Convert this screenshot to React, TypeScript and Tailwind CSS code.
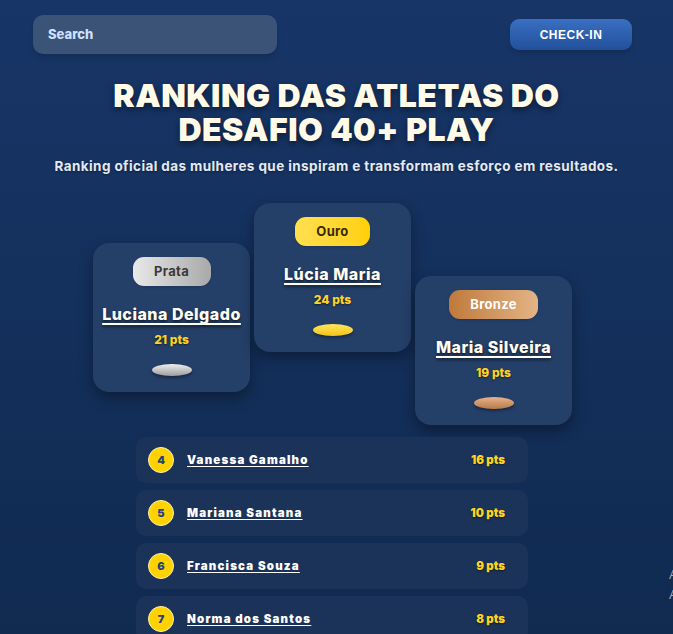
const podium = [
  { name: "Luciana Delgado", pts: 21, label: "Prata", offset: "mt-10", badge: "w-[78px] bg-gradient-to-r from-[#e9e9e9] to-[#a9a9a9] text-[#3a3a3a]", disc: "bg-gradient-to-b from-[#f0f0f0] to-[#9d9d9d]" },
  { name: "Lúcia Maria", pts: 24, label: "Ouro", offset: "mt-0", badge: "w-[75px] bg-gradient-to-r from-[#ffe04d] to-[#ffd000] text-[#3a2a00]", disc: "bg-gradient-to-b from-[#ffe45a] to-[#f2c400]" },
  { name: "Maria Silveira", pts: 19, label: "Bronze", offset: "mt-[73px]", badge: "w-[89px] bg-gradient-to-r from-[#bf7a3a] to-[#e3b486] text-white", disc: "bg-gradient-to-b from-[#e8b38a] to-[#b87a4a]" },
];

const rest = [
  { pos: 4, name: "Vanessa Gamalho", pts: "16 pts" },
  { pos: 5, name: "Mariana Santana", pts: "10 pts" },
  { pos: 6, name: "Francisca Souza", pts: "9 pts" },
  { pos: 7, name: "Norma dos Santos", pts: "8 pts" },
];

export default function App() {
  return (
    <main
      className="relative w-[673px] h-[634px] overflow-hidden bg-gradient-to-b from-[#173567] to-[#102a50] text-white"
      style={{ fontFamily: "Inter, 'Noto Sans', sans-serif" }}
    >
      <header className="flex items-center justify-between pl-[33px] pr-[41px] pt-[15px]">
        <div className="w-[244px] h-[39px] rounded-[10px] bg-[#3a5377] shadow-md flex items-center pl-[15px]">
          <span className="text-[13px] font-extrabold text-[#cfe0ff]">Search</span>
        </div>
        <button className="w-[122px] h-[31px] rounded-[9px] bg-gradient-to-b from-[#3a6fc2] to-[#22509b] shadow-md text-[12px] font-bold tracking-[0.5px] text-white" style={{ fontFamily: "'Liberation Sans', Arial, sans-serif" }}>
          CHECK-IN
        </button>
      </header>

      <section className="text-center mt-[25px]">
        <h1 className="text-[32px] leading-[34px] font-black tracking-[0.5px] text-[#fffbe8] [text-shadow:0_3px_6px_rgba(0,0,0,0.45)]">
          RANKING DAS ATLETAS DO
          <br />
          DESAFIO 40+ PLAY
        </h1>
        <p className="mt-[9px] text-[13.5px] font-bold tracking-[0.4px] text-[#e4e9f2] [text-shadow:0_1px_2px_rgba(0,0,0,0.4)]">
          Ranking oficial das mulheres que inspiram e transformam esforço em resultados.
        </p>
      </section>

      <section className="flex justify-center items-start gap-[4px] mt-[27px] pr-[8px]">
        {podium.map((p) => (
          <div
            key={p.label}
            className={`${p.offset} w-[157px] h-[149px] rounded-[16px] bg-[#243f68] shadow-[0_6px_14px_rgba(0,0,0,0.35)] flex flex-col items-center pt-[14px]`}
          >
            <div className={`${p.badge} h-[29px] rounded-[11px] flex items-center justify-center text-[13px] font-bold tracking-[0.3px] shadow-sm`}>
              {p.label}
            </div>
            <div className="mt-[16px] text-[16px] font-extrabold tracking-[0.5px] underline underline-offset-[3px] decoration-[1.5px] text-[#fffdf2] [text-shadow:0_2px_3px_rgba(0,0,0,0.55)]">
              {p.name}
            </div>
            <div className="mt-[5px] text-[12px] font-extrabold text-[#ffd21f] [text-shadow:0_1px_2px_rgba(0,0,0,0.5)]">
              {p.pts} pts
            </div>
            <div className={`mt-[15px] w-[40px] h-[12px] rounded-[50%] ${p.disc} shadow-[0_2px_3px_rgba(0,0,0,0.35)]`} />
          </div>
        ))}
      </section>

      <section className="flex flex-col gap-[7px] w-[392px] ml-[136px] mt-[12px]">
        {rest.map((r) => (
          <div key={r.pos} className="h-[46px] rounded-[10px] bg-[#1b3358] flex items-center pl-[12px] pr-[23px]">
            <div className="w-[26px] h-[26px] rounded-full bg-[#ffd200] border border-[#fff3b0] flex items-center justify-center text-[11px] font-black text-[#2c3f7a]">
              {r.pos}
            </div>
            <span className="ml-[13px] text-[11.5px] font-black tracking-[1.2px] underline underline-offset-[2px] text-white">
              {r.name}
            </span>
            <span className="ml-auto text-[11.5px] font-black text-[#ffd21f] [text-shadow:0_1px_2px_rgba(0,0,0,0.5)]">
              {r.pts}
            </span>
          </div>
        ))}
      </section>

      <div className="absolute left-[669px] top-[565px] text-[13px] leading-[20px] text-[#9aa8bd] whitespace-nowrap" style={{ fontFamily: "'Liberation Sans', sans-serif" }}>
        <div>Ativar o Windows</div>
        <div>Acesse Configurações</div>
      </div>
    </main>
  );
}
